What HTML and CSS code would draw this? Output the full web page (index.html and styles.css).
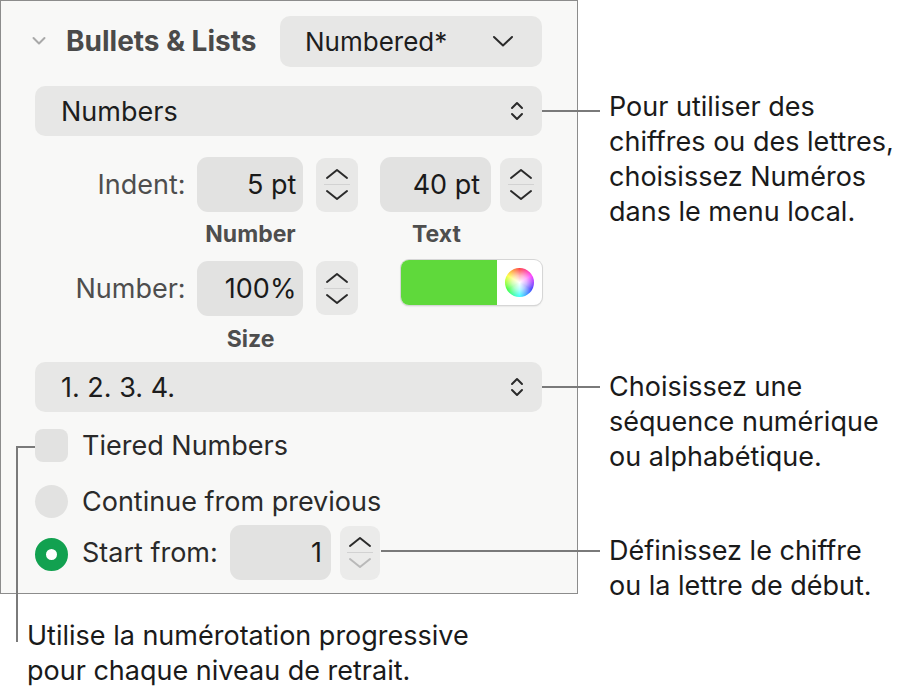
FILE: index.html
```html
<!DOCTYPE html>
<html lang="fr">
<head>
  <meta charset="UTF-8" />
  <title>Bullets &amp; Lists</title>
  <link rel="stylesheet" href="styles.css">
</head>
<body>
  <div class="figure">
    <div class="panel">
      <div class="header">
        <svg class="disclose" width="14" height="10" viewBox="0 0 14 10"><path d="M1.5 2 L7 7.5 L12.5 2" fill="none" stroke="#a9a9a9" stroke-width="2" stroke-linecap="round" stroke-linejoin="round"/></svg>
        <span class="title">Bullets &amp; Lists</span>
        <div class="popup small">
          <span>Numbered*</span>
          <svg width="22" height="14" viewBox="0 0 22 14"><path d="M2 3 L11 11.5 L20 3" fill="none" stroke="#2a2a2a" stroke-width="2" stroke-linecap="round" stroke-linejoin="round"/></svg>
        </div>
      </div>

      <div class="popup wide first">
        <span>Numbers</span>
        <svg width="14" height="22" viewBox="0 0 14 22"><path d="M2 8 L7 3 L12 8 M2 14 L7 19 L12 14" fill="none" stroke="#2a2a2a" stroke-width="2" stroke-linecap="round" stroke-linejoin="round"/></svg>
      </div>

      <div class="row indent">
        <span class="label">Indent:</span>
        <div class="field f1">5 pt</div>
        <div class="stepper s1">
          <svg width="24" height="14" viewBox="0 0 24 14"><path d="M2 11 L12 3 L22 11" fill="none" stroke="#2a2a2a" stroke-width="2" stroke-linecap="round" stroke-linejoin="round"/></svg>
          <i class="sep"></i>
          <svg width="24" height="14" viewBox="0 0 24 14"><path d="M2 3 L12 11 L22 3" fill="none" stroke="#2a2a2a" stroke-width="2" stroke-linecap="round" stroke-linejoin="round"/></svg>
        </div>
        <div class="field f2">40 pt</div>
        <div class="stepper s2">
          <svg width="24" height="14" viewBox="0 0 24 14"><path d="M2 11 L12 3 L22 11" fill="none" stroke="#2a2a2a" stroke-width="2" stroke-linecap="round" stroke-linejoin="round"/></svg>
          <i class="sep"></i>
          <svg width="24" height="14" viewBox="0 0 24 14"><path d="M2 3 L12 11 L22 3" fill="none" stroke="#2a2a2a" stroke-width="2" stroke-linecap="round" stroke-linejoin="round"/></svg>
        </div>
      </div>
      <div class="row sub">
        <span class="cap c1">Number</span>
        <span class="cap c2">Text</span>
      </div>

      <div class="row size">
        <span class="label">Number:</span>
        <div class="field f1">100%</div>
        <div class="stepper s1">
          <svg width="24" height="14" viewBox="0 0 24 14"><path d="M2 11 L12 3 L22 11" fill="none" stroke="#2a2a2a" stroke-width="2" stroke-linecap="round" stroke-linejoin="round"/></svg>
          <i class="sep"></i>
          <svg width="24" height="14" viewBox="0 0 24 14"><path d="M2 3 L12 11 L22 3" fill="none" stroke="#2a2a2a" stroke-width="2" stroke-linecap="round" stroke-linejoin="round"/></svg>
        </div>
        <div class="well">
          <span class="swatch"></span>
          <span class="wheel-box"><span class="wheel"></span></span>
        </div>
      </div>
      <div class="row sub2">
        <span class="cap c1">Size</span>
      </div>

      <div class="popup wide">
        <span>1. 2. 3. 4.</span>
        <svg width="14" height="22" viewBox="0 0 14 22"><path d="M2 8 L7 3 L12 8 M2 14 L7 19 L12 14" fill="none" stroke="#2a2a2a" stroke-width="2" stroke-linecap="round" stroke-linejoin="round"/></svg>
      </div>

      <div class="option tiered">
        <span class="box"></span>
        <span class="opt-text">Tiered Numbers</span>
      </div>
      <div class="option cont">
        <span class="radio"></span>
        <span class="opt-text">Continue from previous</span>
      </div>
      <div class="option start">
        <span class="radio on"></span>
        <span class="opt-text start-label">Start from:</span>
        <div class="field f3">1</div>
        <div class="stepper s3">
          <svg width="24" height="14" viewBox="0 0 24 14"><path d="M2 11 L12 3 L22 11" fill="none" stroke="#2a2a2a" stroke-width="2" stroke-linecap="round" stroke-linejoin="round"/></svg>
          <i class="sep"></i>
          <svg width="24" height="14" viewBox="0 0 24 14"><path d="M2 3 L12 11 L22 3" fill="none" stroke="#b9b9b9" stroke-width="2" stroke-linecap="round" stroke-linejoin="round"/></svg>
        </div>
      </div>
    </div>

    <!-- callouts -->
    <i class="lead h l1"></i>
    <p class="note n1">Pour utiliser des<br>chiffres ou des lettres,<br>choisissez Numéros<br>dans le menu local.</p>
    <i class="lead h l2"></i>
    <p class="note n2">Choisissez une<br>séquence numérique<br>ou alphabétique.</p>
    <i class="lead h l3"></i>
    <p class="note n3">Définissez le chiffre<br>ou la lettre de début.</p>
    <i class="lead h l4"></i>
    <i class="lead v l5"></i>
    <p class="note n4">Utilise la numérotation progressive<br>pour chaque niveau de retrait.</p>
  </div>
</body>
</html>
```

FILE: styles.css
```css
body {
  margin: 0;
  background: #ffffff;
  font-family: Inter, "Noto Sans", sans-serif;
  color: #1d1d1d;
}
.figure {
  position: relative;
  width: 910px;
  height: 689px;
}
.panel {
  box-sizing: border-box;
  width: 578px;
  height: 594px;
  border: 1.5px solid #8c8c8c;
  background: #f8f8f7;
  padding: 14px 35px 0 34px;
  display: flex;
  flex-direction: column;
}
.header {
  display: flex;
  align-items: center;
  height: 52px;
}
.disclose {
  margin-left: -3px;
}
.title {
  margin-left: 20px;
  font-size: 28px;
  font-weight: 700;
  color: #4a4a4a;
}
.popup {
  box-sizing: border-box;
  display: flex;
  align-items: center;
  justify-content: space-between;
  background: #e7e7e6;
  border-radius: 10px;
  font-size: 27px;
  color: #1d1d1d;
}
.popup.small {
  margin-left: auto;
  width: 262px;
  height: 51px;
  padding: 0 28px 0 25px;
  font-size: 26px;
}
.popup.wide {
  height: 50px;
  padding: 0 18px 0 26px;
}
.popup.first {
  margin-top: 19px;
}
.row {
  display: flex;
  align-items: center;
}
.row.indent {
  margin-top: 21px;
  height: 55px;
}
.row.size {
  margin-top: 4px;
  height: 56px;
}
.label {
  width: 151px;
  text-align: right;
  font-size: 27px;
  color: #4e4e4e;
}
.field {
  box-sizing: border-box;
  height: 55px;
  background: #e2e2e1;
  border-radius: 11px;
  font-size: 27px;
  line-height: 55px;
  text-align: right;
  padding-right: 7px;
  color: #1a1a1a;
}
.f1 {
  width: 107px;
  margin-left: 11px;
}
.f2 {
  width: 111px;
  margin-left: 22px;
  padding-right: 11px;
}
.stepper {
  box-sizing: border-box;
  width: 42px;
  height: 54px;
  background: #e8e8e7;
  border-radius: 9px;
  display: flex;
  flex-direction: column;
  align-items: center;
  justify-content: center;
  gap: 3px;
}
.sep {
  display: block;
  width: 26px;
  height: 1px;
  background: #d2d2d2;
}
.s1 {
  margin-left: 13px;
}
.s2 {
  margin-left: 9px;
}
.row.sub {
  height: 44px;
  line-height: 44px;
}
.row.sub2 {
  height: 46px;
  line-height: 46px;
}
.cap {
  font-size: 23px;
  font-weight: 700;
  color: #4e4e4e;
  text-align: center;
}
.c1 {
  width: 107px;
  margin-left: 162px;
}
.c2 {
  width: 111px;
  margin-left: 77px;
}
.well {
  display: flex;
  align-self: flex-start;
  margin-left: 43px;
  width: 141px;
  height: 45px;
  border-radius: 8px;
  overflow: hidden;
  background: #ffffff;
  box-shadow: 0 0 0 1px #d6d6d6, 0 1px 2px rgba(0, 0, 0, 0.2);
}
.swatch {
  width: 96px;
  background: #5fd93b;
}
.wheel-box {
  flex: 1;
  display: flex;
  align-items: center;
  justify-content: center;
}
.wheel {
  width: 29px;
  height: 29px;
  border-radius: 50%;
  background: radial-gradient(circle, #ffffff 0%, rgba(255, 255, 255, 0.6) 35%, rgba(255, 255, 255, 0) 70%),
    conic-gradient(#ff4040, #ff40ff, #4040ff, #40ffff, #40ff40, #ffff40, #ff4040);
}
.option {
  display: flex;
  align-items: center;
}
.tiered {
  margin-top: 17px;
  height: 33px;
}
.cont {
  margin-top: 23px;
  height: 33px;
}
.start {
  margin-top: 7px;
  height: 55px;
}
.box,
.radio {
  width: 33px;
  height: 33px;
  background: #e2e2e1;
  border-radius: 8px;
  flex-shrink: 0;
}
.radio {
  border-radius: 50%;
}
.radio.on {
  box-sizing: border-box;
  margin-top: 3px;
  background: #ffffff;
  border: 11px solid #12a150;
}
.opt-text {
  margin-left: 14px;
  font-size: 27px;
  color: #2a2a2a;
}
.start-label {
  width: 148px;
}
.f3 {
  width: 101px;
  padding-right: 9px;
}
.s3 {
  margin-left: 9px;
  width: 40px;
  background: #ebebea;
}
.lead {
  position: absolute;
  display: block;
  background: #7a7a7a;
}
.lead.h {
  height: 2px;
}
.lead.v {
  width: 2px;
}
.l1 {
  left: 542px;
  top: 110px;
  width: 58px;
}
.l2 {
  left: 542px;
  top: 386px;
  width: 58px;
}
.l3 {
  left: 381px;
  top: 550px;
  width: 219px;
}
.l4 {
  left: 16px;
  top: 446px;
  width: 19px;
}
.l5 {
  left: 16px;
  top: 446px;
  height: 196px;
}
.note {
  position: absolute;
  margin: 0;
  font-size: 27px;
  line-height: 35px;
  color: #1a1a1a;
}
.n1 {
  left: 609px;
  top: 89px;
}
.n2 {
  left: 609px;
  top: 369px;
}
.n3 {
  left: 609px;
  top: 533px;
}
.n4 {
  left: 27px;
  top: 618px;
}
```
